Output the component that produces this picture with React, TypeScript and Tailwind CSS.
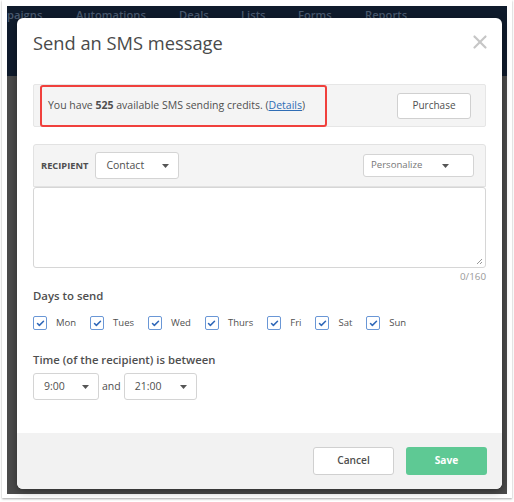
import { Check, X } from "lucide-react";

const days = ["Mon", "Tues", "Wed", "Thurs", "Fri", "Sat", "Sun"];
const navItems = [
  { label: "paigns", w: "w-[69px]" },
  { label: "Automations", w: "w-[103px]" },
  { label: "Deals", w: "w-[62px]" },
  { label: "Lists", w: "w-[57px]" },
  { label: "Forms", w: "w-[67px]" },
  { label: "Reports", w: "w-[70px]" },
];

function Caret() {
  return (
    <svg width="7" height="4" viewBox="0 0 7 4">
      <path d="M0 0h7L3.5 4z" fill="#555" />
    </svg>
  );
}

function Select({ label, width, height = "h-[27px]", small }: { label: string; width: string; height?: string; small?: boolean }) {
  return (
    <div
      className={`${width} ${height} flex items-center justify-between bg-white border border-[#d4d4d4] rounded-[3px] ${
        small ? "pl-[7px] pr-[24px] text-[9.6px] text-[#777]" : "pl-[10px] pr-[9px] text-[10.5px] text-[#4f4f4f]"
      }`}
    >
      <span>{label}</span>
      <Caret />
    </div>
  );
}

export default function App() {
  return (
    <div className="w-[514px] h-[502px] bg-white font-['Open_Sans','Liberation_Sans',sans-serif] overflow-hidden">
      <div className="ml-[2px] w-[510px] h-[498px] bg-white shadow-[0_1px_2px_rgba(0,0,0,0.35)] pt-[6px] pl-[5px] pr-[5px] pb-[4px]">
        <div className="h-full bg-[linear-gradient(#0f1b2c_0,#0f1b2c_70px,#4b4b4b_70px)] flex flex-col">
          {/* top nav behind the overlay */}
          <div className="h-[12px] flex text-[11.2px] font-semibold text-[#4a5a70] leading-[18px] whitespace-nowrap">
            {navItems.map((n) => (
              <div key={n.label} className={n.w}>
                {n.label}
              </div>
            ))}
          </div>

          {/* modal */}
          <div className="relative ml-[10px] mr-[5px] h-[471px] bg-white rounded-[6px] shadow-[0_2px_8px_rgba(0,0,0,0.4)] flex flex-col text-[#4f4f4f]">
            <div className="px-[16px] pt-[11px]">
              <h1 className="text-[18.3px] leading-[28px] text-[#4a4a4a]">Send an SMS message</h1>
            </div>
            <X className="absolute right-[11px] top-[13px] w-[22px] h-[22px] text-[#c6c6c6]" strokeWidth={2.4} />

            <div className="px-[16px] flex flex-col">
              {/* credits */}
              <div className="relative mt-[27px] h-[43px] bg-[#f4f4f4] border border-[#e6e6e6] rounded-[2px] flex items-center justify-between pl-[14px] pr-[14px]">
                <div className="absolute left-[6px] top-0 -bottom-px w-[287px] border-2 border-[#f0403c] rounded-[3px]" />
                <p className="text-[10.5px] text-[#4f4f4f]">
                  You have <b className="font-bold">525</b> available SMS sending credits. (
                  <span className="text-[#2f6db5] underline">Details</span>)
                </p>
                <button className="w-[74px] h-[26px] bg-white border border-[#d0d0d0] rounded-[3px] text-[10px] text-[#4f4f4f]">
                  Purchase
                </button>
              </div>

              {/* recipient */}
              <div className="mt-[17px] h-[43px] bg-[#f4f4f4] border border-[#e2e2e2] rounded-t-[3px] flex items-center pl-[7px] pr-[11px]">
                <span className="text-[9.3px] font-bold text-[#4f4f4f] mr-[7px]">RECIPIENT</span>
                <Select label="Contact" width="w-[84px]" />
                <div className="flex-1" />
                <Select label="Personalize" width="w-[111px]" height="h-[23px]" small />
              </div>
              <div className="relative h-[81px] bg-white border border-[#d6d6d6] rounded-[3px]">
                <svg width="7" height="7" viewBox="0 0 7 7" className="absolute right-[2px] bottom-[2px]">
                  <path d="M1 6L6 1M4 6L6 4" stroke="#999" strokeWidth="1" />
                </svg>
              </div>
              <div className="mt-[2px] text-right text-[9.8px] leading-[14px] text-[#999]">0/160</div>

              <div className="mt-[3px] text-[11.4px] leading-[18px] font-semibold text-[#4f4f4f]">Days to send</div>
              <div className="mt-[9px] h-[18px] flex items-center gap-[14px]">
                {days.map((d) => (
                  <div key={d} className="flex items-center gap-[9px]">
                    <div className="w-[14px] h-[14px] border-[1.5px] border-[#6a97d6] rounded-[2px] flex items-center justify-center bg-white">
                      <Check className="w-[9px] h-[9px] text-[#2f67b8]" strokeWidth={4} />
                    </div>
                    <span className="text-[9.5px] text-[#4f4f4f]">{d}</span>
                  </div>
                ))}
              </div>

              <div className="mt-[19px] text-[11.3px] leading-[18px] font-semibold text-[#4f4f4f]">
                Time (of the recipient) is between
              </div>
              <div className="mt-[4px] flex items-center">
                <Select label="9:00" width="w-[66px]" />
                <span className="mx-[3px] text-[10.5px] text-[#4f4f4f]">and</span>
                <Select label="21:00" width="w-[73px]" />
              </div>
            </div>

            <div className="mt-auto h-[56px] bg-[#f2f2f2] rounded-b-[6px] flex items-center justify-end gap-[12px] pr-[15px]">
              <button className="w-[81px] h-[28px] bg-white border border-[#d0d0d0] rounded-[3px] text-[10.2px] font-semibold text-[#4f4f4f]">
                Cancel
              </button>
              <button className="w-[81px] h-[28px] bg-[#5ec994] rounded-[3px] text-[10.2px] font-bold text-white">
                Save
              </button>
            </div>
          </div>
        </div>
      </div>
    </div>
  );
}
